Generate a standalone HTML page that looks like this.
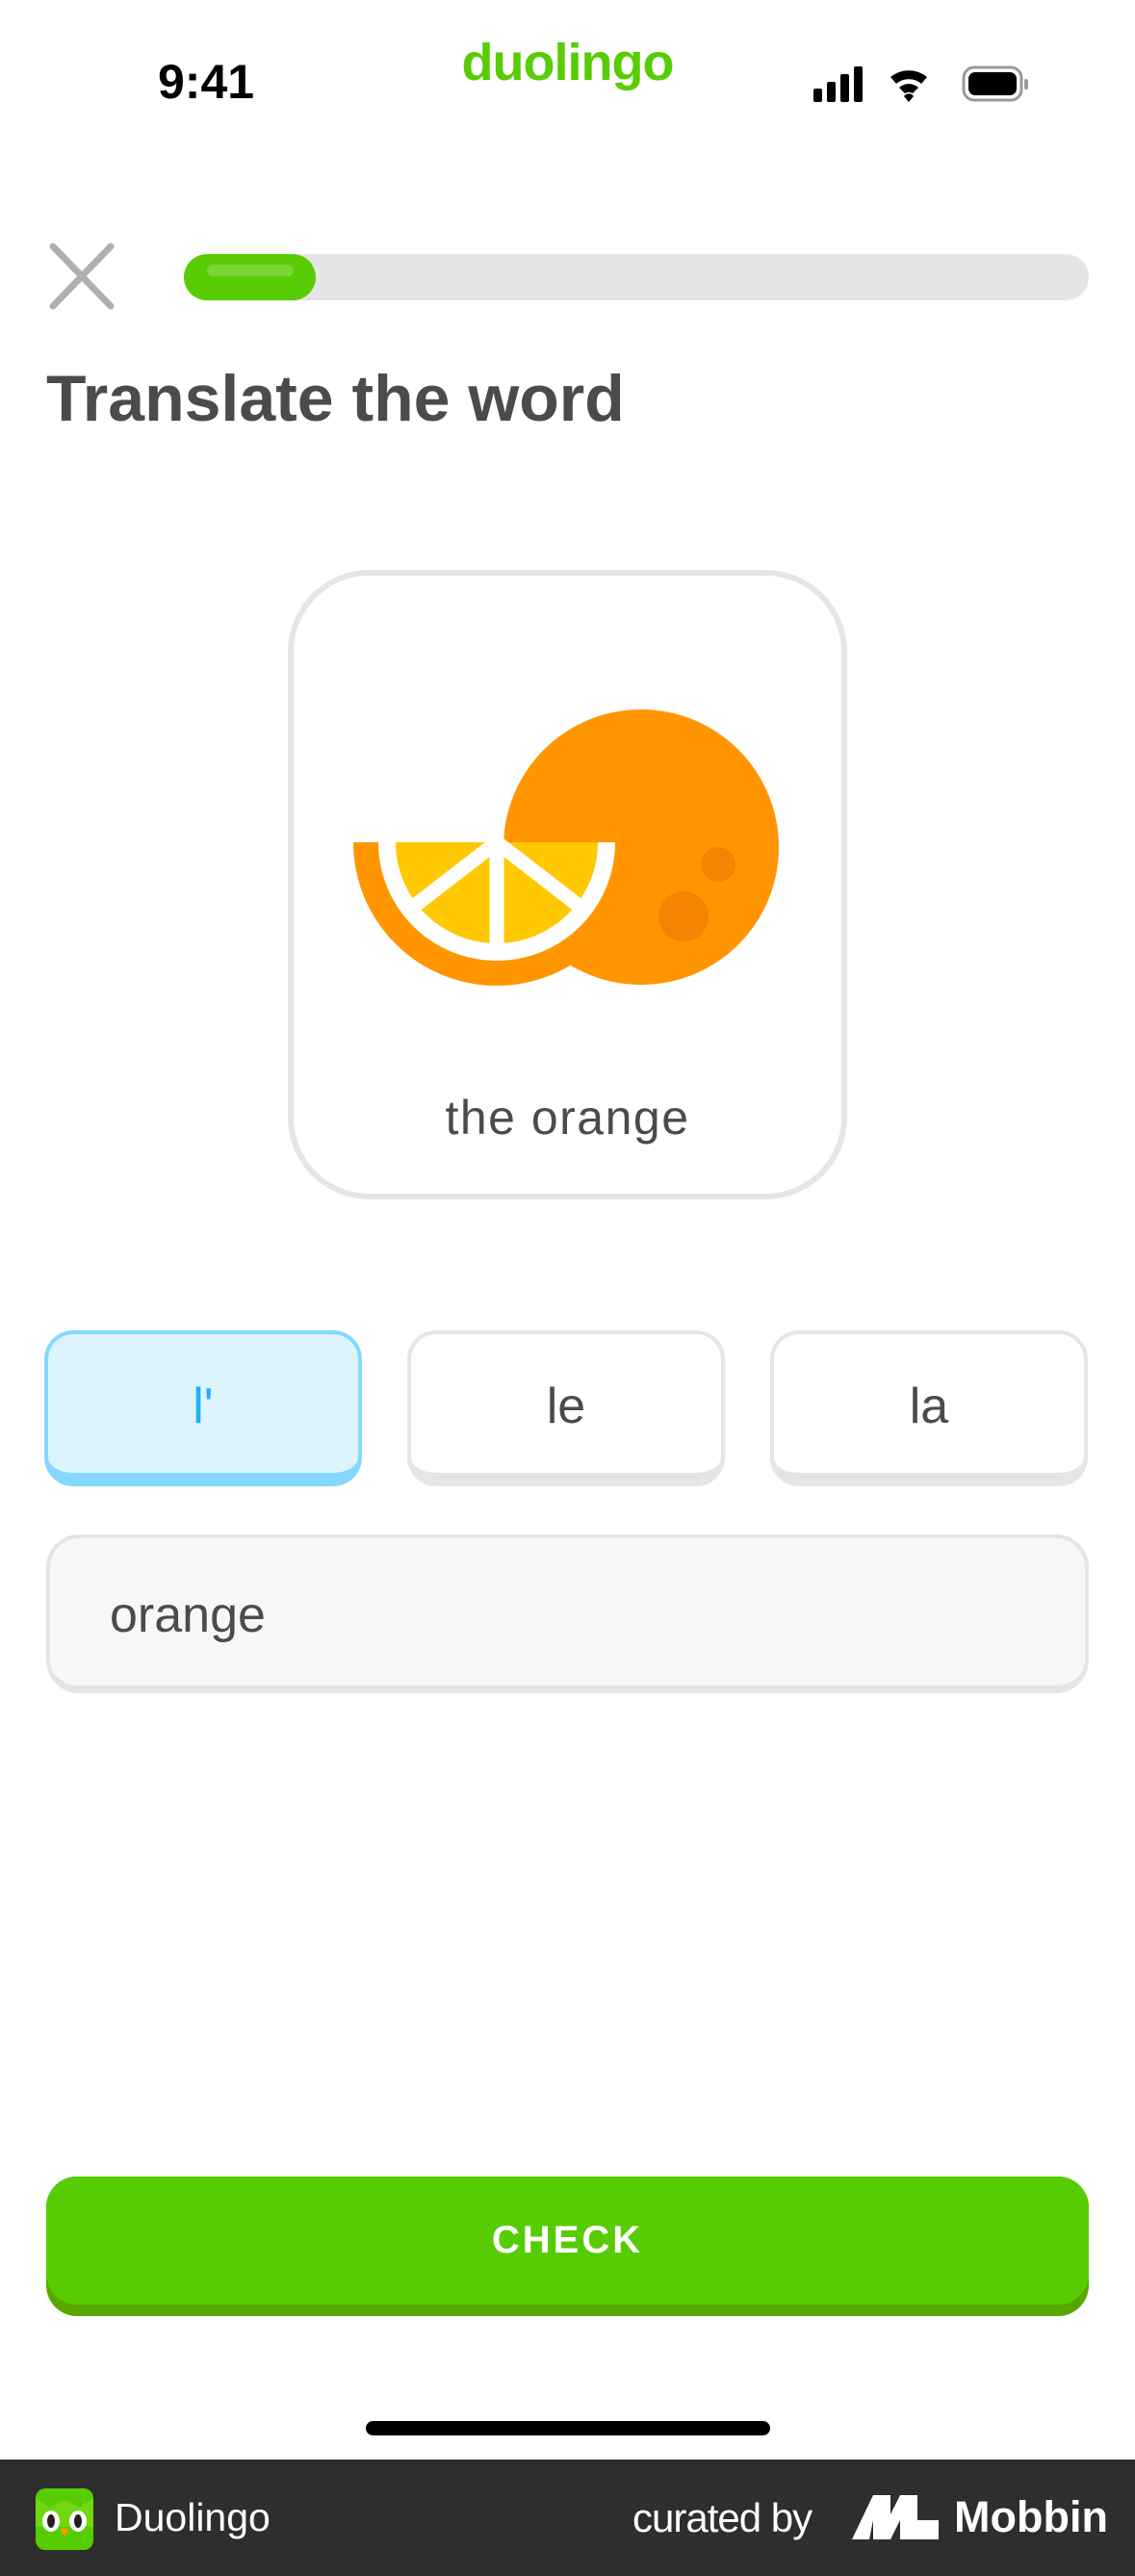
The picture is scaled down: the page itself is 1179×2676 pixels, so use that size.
<!DOCTYPE html>
<html><head><meta charset="utf-8"><style>
*{margin:0;padding:0;box-sizing:border-box}
body{width:1179px;height:2676px;background:#fff;position:relative;overflow:hidden;font-family:"Liberation Sans",sans-serif}
.abs{position:absolute}
.chip{position:absolute;top:1382px;width:330px;height:162px;border:4px solid #e5e5e5;border-bottom-width:14px;border-radius:30px;background:#fff;display:flex;align-items:center;justify-content:center;font-size:52px;color:#4b4b4b;padding-top:6px}
</style></head><body>
<div class="abs" style="left:164px;top:56px;font-size:50px;font-weight:600;color:#000">9:41</div>
<div class="abs" style="left:0;width:1179px;top:34px;text-align:center;font-size:54px;font-weight:bold;color:#58cc02;letter-spacing:-1px">duolingo</div>
<svg class="abs" style="left:845px;top:66px" width="240" height="44" viewBox="0 0 240 44">
<rect x="0" y="26" width="9" height="14" rx="2"/><rect x="14" y="19" width="9" height="21" rx="2"/><rect x="28" y="11" width="9" height="29" rx="2"/><rect x="42" y="3" width="9" height="37" rx="2"/>
<path d="M80 14 A30 30 0 0 1 118 14 L112 21 A20 20 0 0 0 86 21Z M89 25 A15 15 0 0 1 109 25 L103 31 A7 7 0 0 0 95 31Z M99 40 L94 34 A6 6 0 0 1 104 34Z" fill="#000"/>
<rect x="156" y="4" width="60" height="34" rx="11" fill="none" stroke="#999" stroke-width="3"/><rect x="161" y="9" width="50" height="24" rx="7"/><rect x="219" y="16" width="4" height="11" rx="2" fill="#999"/>
</svg>
<svg class="abs" style="left:51px;top:252px" width="68" height="70"><path d="M4 4 L64 66 M64 4 L4 66" stroke="#afafaf" stroke-width="7" stroke-linecap="round"/></svg>
<div class="abs" style="left:191px;top:264px;width:940px;height:48px;border-radius:24px;background:#e5e5e5"></div>
<div class="abs" style="left:191px;top:264px;width:137px;height:48px;border-radius:24px;background:#58cc02"></div>
<div class="abs" style="left:215px;top:275px;width:90px;height:12px;border-radius:6px;background:#79d634"></div>
<div class="abs" style="left:48px;top:375px;font-size:68px;font-weight:bold;color:#4b4b4b">Translate the word</div>
<div class="abs" style="left:299px;top:592px;width:581px;height:654px;border:6px solid #e5e5e5;border-radius:85px"></div>
<svg class="abs" style="left:0;top:0" width="1179" height="1300">
<circle cx="666" cy="880" r="143" fill="#ff9600"/>
<path d="M367 875 A149 149 0 0 0 665 875Z" fill="#ff9600"/>
<path d="M393 875 A123 123 0 0 0 639 875Z" fill="#fff"/>
<path d="M411 875 A105 105 0 0 0 621 875Z" fill="#ffc800"/>
<path d="M516 875 L516 985 M516 875 L428 943 M516 875 L604 943" stroke="#fff" stroke-width="15"/>
<circle cx="746" cy="898" r="18" fill="#f38300"/>
<circle cx="710" cy="952" r="26" fill="#f38300"/>
</svg>
<div class="abs" style="left:299px;width:581px;top:1132px;text-align:center;font-size:50px;color:#4b4b4b;letter-spacing:1.5px">the orange</div>
<div class="chip" style="left:46px;background:#ddf4ff;border-color:#84d8ff;color:#1cb0f6">l'</div>
<div class="chip" style="left:423px">le</div>
<div class="chip" style="left:800px">la</div>
<div class="abs" style="left:48px;top:1594px;width:1083px;height:165px;border:4px solid #e5e5e5;border-bottom-width:8px;border-radius:34px;background:#f7f7f7;font-size:52px;color:#4b4b4b;padding:50px 0 0 62px">orange</div>
<div class="abs" style="left:48px;top:2261px;width:1083px;height:145px;border-radius:32px;background:#58a700"></div>
<div class="abs" style="left:48px;top:2261px;width:1083px;height:133px;border-radius:32px;background:#58cc02;color:#fff;font-size:40px;font-weight:bold;letter-spacing:3px;text-align:center;line-height:133px">CHECK</div>
<div class="abs" style="left:380px;top:2515px;width:420px;height:15px;border-radius:8px;background:#000"></div>
<div class="abs" style="left:0;top:2555px;width:1179px;height:121px;background:#2e2e2e"></div>
<svg class="abs" style="left:37px;top:2585px" width="60" height="64" viewBox="0 0 60 64">
<rect width="60" height="64" rx="10" fill="#58cc02"/><path d="M0 10 L15 20 L30 12 L45 20 L60 10 L60 40 L0 40Z" fill="#89e219" opacity=".5"/>
<ellipse cx="16" cy="34" rx="9" ry="11" fill="#fff"/><ellipse cx="44" cy="34" rx="9" ry="11" fill="#fff"/>
<ellipse cx="16" cy="34" rx="4" ry="7" fill="#222"/><ellipse cx="44" cy="34" rx="4" ry="7" fill="#222"/>
<path d="M25 42 L35 42 L30 50Z" fill="#ff9600"/></svg>
<div class="abs" style="left:119px;top:2592px;font-size:41px;color:#fff">Duolingo</div>
<div class="abs" style="left:657px;top:2592px;font-size:42px;color:#fff;letter-spacing:-1px">curated by</div>
<svg class="abs" style="left:885px;top:2592px" width="90" height="46" viewBox="0 0 90 46"><path d="M0 46 L22 0 L40 0 L40 20 L50 0 L68 0 L68 26 L90 26 L90 46 L50 46 L50 26 L40 46 L22 46 L22 26 L18 46Z" fill="#fff"/></svg>
<div class="abs" style="left:991px;top:2589px;font-size:45px;font-weight:bold;color:#fff">Mobbin</div>
</body></html>
